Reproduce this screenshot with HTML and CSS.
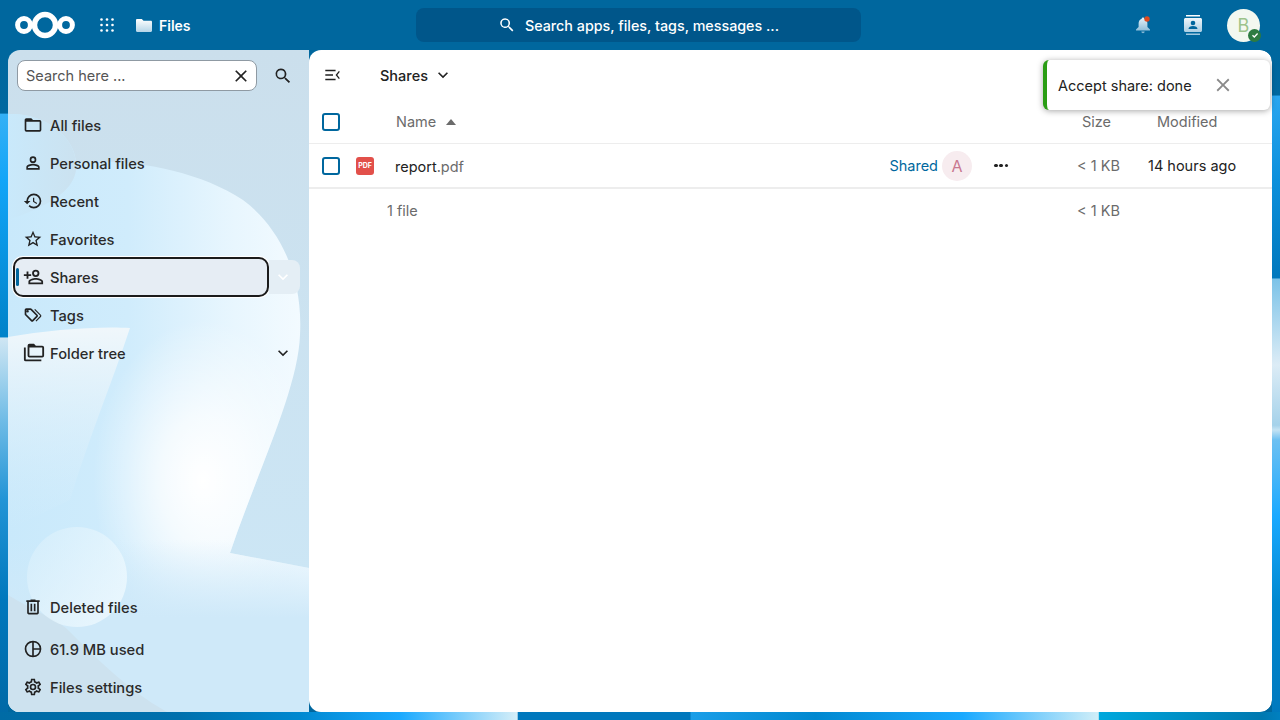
FILE: index.html
```html
<!DOCTYPE html>
<html lang="en">
<head>
    <meta charset="UTF-8">
    <meta name="viewport" content="width=device-width, initial-scale=1.0">
    <title>Files - Nextcloud</title>
    <link rel="stylesheet" href="styles.css">
</head>
<body>
    <!-- wallpaper: only the strips around the panels show -->
    <svg class="wallpaper" viewBox="0 0 1280 720" aria-hidden="true">
        <defs>
            <linearGradient id="wallLeft" gradientUnits="userSpaceOnUse" x1="0" y1="50" x2="0" y2="720">
                <stop offset="0" stop-color="#00679e"/>
                <stop offset="0.094" stop-color="#0068a0"/>
                <stop offset="0.096" stop-color="#35b0f5"/>
                <stop offset="0.194" stop-color="#12a5f8"/>
                <stop offset="0.428" stop-color="#0082c9"/>
                <stop offset="0.43" stop-color="#cfe6f3"/>
                <stop offset="0.552" stop-color="#70bce6"/>
                <stop offset="0.672" stop-color="#2294d6"/>
                <stop offset="0.821" stop-color="#0078bd"/>
                <stop offset="1" stop-color="#0068a5"/>
            </linearGradient>
            <linearGradient id="wallRight" gradientUnits="userSpaceOnUse" x1="0" y1="50" x2="0" y2="720">
                <stop offset="0" stop-color="#00679e"/>
                <stop offset="0.067" stop-color="#0068a0"/>
                <stop offset="0.069" stop-color="#2aa6f0"/>
                <stop offset="0.194" stop-color="#0c90dc"/>
                <stop offset="0.34" stop-color="#0078bd"/>
                <stop offset="0.342" stop-color="#7cc3e8"/>
                <stop offset="0.47" stop-color="#dcecf6"/>
                <stop offset="0.56" stop-color="#a5d2ea"/>
                <stop offset="0.567" stop-color="#c5e3f3"/>
                <stop offset="0.582" stop-color="#6cc0f2"/>
                <stop offset="0.697" stop-color="#1aa9ff"/>
                <stop offset="0.825" stop-color="#0088d0"/>
                <stop offset="1" stop-color="#0078bd"/>
            </linearGradient>
            <linearGradient id="wallBottom" gradientUnits="userSpaceOnUse" x1="0" y1="0" x2="1280" y2="0">
                <stop offset="0" stop-color="#006ba5"/>
                <stop offset="0.14" stop-color="#0070ad"/>
                <stop offset="0.234" stop-color="#0088d0"/>
                <stop offset="0.312" stop-color="#1aa9ff"/>
                <stop offset="0.404" stop-color="#d5eef8"/>
                <stop offset="0.405" stop-color="#0078bd"/>
                <stop offset="0.539" stop-color="#0078bd"/>
                <stop offset="0.54" stop-color="#1a9ee8"/>
                <stop offset="0.637" stop-color="#0088d0"/>
                <stop offset="0.752" stop-color="#1aa9ff"/>
                <stop offset="0.858" stop-color="#d0eef8"/>
                <stop offset="0.859" stop-color="#00a8dd"/>
                <stop offset="0.986" stop-color="#0078b0"/>
                <stop offset="1" stop-color="#0080c0"/>
            </linearGradient>
        </defs>
        <rect width="1280" height="720" fill="#00679e"/>
        <rect x="0" y="50" width="8" height="670" fill="url(#wallLeft)"/>
        <rect x="1272" y="50" width="8" height="670" fill="url(#wallRight)"/>
        <rect x="0" y="712" width="1280" height="8" fill="url(#wallBottom)"/>
    </svg>

    <header class="topbar">
        <div class="topbar-left">
            <svg class="logo" viewBox="0 0 62 30" width="62" height="30">
                <circle cx="10" cy="15" r="6.4" fill="none" stroke="#fff" stroke-width="5"/>
                <circle cx="31" cy="15" r="10.5" fill="none" stroke="#fff" stroke-width="5.4"/>
                <circle cx="52" cy="15" r="6.4" fill="none" stroke="#fff" stroke-width="5"/>
            </svg>
            <svg class="apps" viewBox="0 0 14 14" width="14" height="14">
                <g fill="#fff">
                    <circle cx="1.5" cy="1.5" r="1.3"/><circle cx="7" cy="1.5" r="1.3"/><circle cx="12.5" cy="1.5" r="1.3"/>
                    <circle cx="1.5" cy="7" r="1.3"/><circle cx="7" cy="7" r="1.3"/><circle cx="12.5" cy="7" r="1.3"/>
                    <circle cx="1.5" cy="12.5" r="1.3"/><circle cx="7" cy="12.5" r="1.3"/><circle cx="12.5" cy="12.5" r="1.3"/>
                </g>
            </svg>
            <div class="current-app">
                <svg viewBox="0 0 16 13" width="16" height="13">
                    <defs>
                        <linearGradient id="appFade" x1="0" y1="0" x2="0" y2="1">
                            <stop offset="0" stop-color="#fff"/>
                            <stop offset="1" stop-color="#b5d5e8"/>
                        </linearGradient>
                    </defs>
                    <path d="M1.2 0h4.6l1.7 1.8h7.3c.7 0 1.2.5 1.2 1.2v8.8c0 .7-.5 1.2-1.2 1.2H1.2C.5 13 0 12.5 0 11.8V1.2C0 .5.5 0 1.2 0z" fill="url(#appFade)"/>
                </svg>
                <span>Files</span>
            </div>
        </div>

        <div class="unified-search">
            <svg viewBox="0 0 24 24" width="18" height="18"><path d="M9.5 3a6.5 6.5 0 0 1 4.95 10.71l.27.29h.78l5 5-1.5 1.5-5-5v-.78l-.29-.27A6.5 6.5 0 1 1 9.5 3m0 2a4.5 4.500 0 1 0 0 9 4.500 4.500 0 0 0 0-9z" fill="#fff"/></svg>
            <span>Search apps, files, tags, messages ...</span>
        </div>

        <div class="topbar-right">
            <svg class="bell" viewBox="0 0 16 18" width="16" height="18">
                <defs>
                    <linearGradient id="bellFade" x1="0" y1="0" x2="0" y2="1">
                        <stop offset="0" stop-color="#e6f1f7"/>
                        <stop offset="1" stop-color="#7fb4d3"/>
                    </linearGradient>
                </defs>
                <path d="M8 1.5c-.8 0-1.3.6-1.3 1.3C4.7 3.500 3.600 5.300 3.600 7.500V11L1 13.600v1h14v-1L12.400 11V7.500c0-2.200-1.100-4-3.100-4.700C9.300 2.100 8.800 1.500 8 1.500zM6.300 15.500a1.700 1.700 0 0 0 3.400 0z" fill="url(#bellFade)"/>
                <circle cx="12" cy="3" r="2.7" fill="#dd4a1f"/>
            </svg>
            <svg class="contacts" viewBox="0 0 18 20" width="18" height="20">
                <defs>
                    <linearGradient id="cardFade" x1="0" y1="0" x2="0" y2="1">
                        <stop offset="0" stop-color="#fff"/>
                        <stop offset="1" stop-color="#9cc6de"/>
                    </linearGradient>
                </defs>
                <path d="M2 0h14v1.500H2zM2 18.500h14V20H2zM1.500 3h15c.8 0 1.500.7 1.500 1.500v11c0 .8-.7 1.500-1.500 1.500h-15C.7 17 0 16.300 0 15.500v-11C0 3.700.7 3 1.500 3z" fill="url(#cardFade)"/>
                <circle cx="9" cy="8" r="2.3" fill="#00679e"/>
                <path d="M4.500 14c0-2 2-3 4.500-3s4.500 1 4.500 3z" fill="#00679e"/>
            </svg>
            <div class="user-avatar">
                <span>B</span>
                <span class="user-status">
                    <svg viewBox="0 0 10 10" width="10" height="10"><path d="M2.500 5.200l1.800 1.800 3.300-3.500" fill="none" stroke="#fff" stroke-width="1.300"/></svg>
                </span>
            </div>
        </div>
    </header>

    <div class="content">
        <nav class="sidebar">
            <!-- soft shapes behind the nav -->
            <svg class="sidebar-art" viewBox="0 0 301 662" aria-hidden="true">
                <defs>
                    <linearGradient id="artBase" x1="0" y1="0" x2="0" y2="1">
                        <stop offset="0" stop-color="#cbdfec"/>
                        <stop offset="0.8" stop-color="#cce6f5"/>
                    </linearGradient>
                    <linearGradient id="artShape" x1="0" y1="0" x2="1" y2="0">
                        <stop offset="0" stop-color="#c9e9fb"/>
                        <stop offset="0.4" stop-color="#d0ecfc"/>
                        <stop offset="0.75" stop-color="#e8f6fe"/>
                        <stop offset="1" stop-color="#f4fbff"/>
                    </linearGradient>
                    <linearGradient id="artBlob" x1="0" y1="0" x2="1" y2="0">
                        <stop offset="0" stop-color="#c9e9fb"/>
                        <stop offset="1" stop-color="#cbe2f0"/>
                    </linearGradient>
                    <linearGradient id="artBand" x1="0" y1="0" x2="0" y2="1">
                        <stop offset="0" stop-color="#f0f7fb"/>
                        <stop offset="1" stop-color="#d6edfa" stop-opacity="0"/>
                    </linearGradient>
                    <radialGradient id="artGlow">
                        <stop offset="0" stop-color="#fff"/>
                        <stop offset="0.4" stop-color="#fff" stop-opacity="0.7"/>
                        <stop offset="1" stop-color="#fff" stop-opacity="0"/>
                    </radialGradient>
                    <linearGradient id="artFloor" x1="0" y1="0" x2="0" y2="1">
                        <stop offset="0" stop-color="#cfe9f9" stop-opacity="0"/>
                        <stop offset="0.45" stop-color="#cfe9f9"/>
                    </linearGradient>
                    <linearGradient id="artBall" x1="0" y1="0" x2="1" y2="0.6">
                        <stop offset="0" stop-color="#d6eefb"/>
                        <stop offset="1" stop-color="#f2fbff"/>
                    </linearGradient>
                    <clipPath id="artClip">
                        <path d="M0 64C35 62 66 85 68 112 120 108 190 120 235 150 275 180 295 230 292 285 290 340 250 420 222 503L301 518V662H0Z"/>
                    </clipPath>
                </defs>
                <rect width="301" height="662" fill="url(#artBase)"/>
                <g clip-path="url(#artClip)">
                    <rect width="301" height="662" fill="url(#artShape)"/>
                    <path d="M0 64C35 62 66 85 68 112 70 130 60 150 0 170Z" fill="url(#artBlob)"/>
                    <path d="M0 287C40 280 90 276 122 278 105 330 80 390 62 450L0 480Z" fill="url(#artBand)"/>
                    <ellipse cx="195" cy="430" rx="110" ry="160" fill="url(#artGlow)"/>
                    <rect y="490" width="301" height="172" fill="url(#artFloor)"/>
                </g>
                <path d="M0 545C25 560 50 570 60 580 90 610 120 640 159 662H0Z" fill="#cde2ef"/>
                <circle cx="69" cy="527" r="50" fill="url(#artBall)" fill-opacity="0.7"/>
            </svg>

            <div class="filter-row">
                <div class="filter-input">
                    <span>Search here ...</span>
                    <svg viewBox="0 0 24 24" width="20" height="20"><path d="M19 6.41L17.59 5 12 10.59 6.41 5 5 6.41 10.59 12 5 17.59 6.41 19 12 13.41 17.59 19 19 17.59 13.41 12z" fill="#222"/></svg>
                </div>
                <svg viewBox="0 0 24 24" width="20" height="20"><path d="M9.5 3a6.5 6.5 0 0 1 4.95 10.71l.27.29h.78l5 5-1.5 1.5-5-5v-.78l-.29-.27A6.5 6.5 0 1 1 9.5 3m0 2a4.500 4.500 0 1 0 0 9 4.500 4.500 0 0 0 0-9z" fill="#222"/></svg>
            </div>

            <ul class="nav-list">
                <li class="nav-item">
                    <svg viewBox="0 0 24 24" width="20" height="20"><path d="M20 18H4V8h16m0-2h-8l-2-2H4c-1.110 0-2 .89-2 2v12a2 2 0 0 0 2 2h16a2 2 0 0 0 2-2V8a2 2 0 0 0-2-2z" fill="#222"/></svg>
                    <span>All files</span>
                </li>
                <li class="nav-item">
                    <svg viewBox="0 0 24 24" width="20" height="20"><path d="M12 4a4 4 0 1 1 0 8 4 4 0 0 1 0-8m0 2a2 2 0 1 0 0 4 2 2 0 0 0 0-4m0 7c2.670 0 8 1.330 8 4v3H4v-3c0-2.670 5.330-4 8-4m0 1.900c-2.970 0-6.100 1.460-6.100 2.100v1.100h12.200V17c0-.64-3.130-2.100-6.100-2.100z" fill="#222"/></svg>
                    <span>Personal files</span>
                </li>
                <li class="nav-item">
                    <svg viewBox="0 0 24 24" width="20" height="20"><path d="M13.500 8H12v5l4.280 2.540.72-1.210-3.500-2.080V8M13 3a9 9 0 0 0-9 9H1l3.960 4.030L9 12H6a7 7 0 1 1 7 7c-1.930 0-3.680-.79-4.940-2.060l-1.420 1.420A8.900 8.900 0 0 0 13 21a9 9 0 0 0 0-18z" fill="#222"/></svg>
                    <span>Recent</span>
                </li>
                <li class="nav-item">
                    <svg viewBox="0 0 24 24" width="20" height="20"><path d="M12 15.390l-3.760 2.270.99-4.280-3.320-2.880 4.380-.37L12 6.100l1.710 4.040 4.380.37-3.320 2.880.99 4.280M22 9.240l-7.190-.61L12 2 9.190 8.630 2 9.240l5.450 4.730L5.820 21 12 17.270 18.180 21l-1.640-7.030L22 9.240z" fill="#222"/></svg>
                    <span>Favorites</span>
                </li>
                <li class="nav-item active">
                    <svg viewBox="0 0 24 24" width="22" height="22"><path d="M15 4a4 4 0 1 1 0 8 4 4 0 0 1 0-8m0 2a2 2 0 1 0 0 4 2 2 0 0 0 0-4M7 6v3h3v2H7v3H5v-3H2V9h3V6h2m8 7c2.670 0 8 1.330 8 4v3H7v-3c0-2.670 5.330-4 8-4m0 1.900c-3 0-6.100 1.460-6.100 2.100v1.100h12.200V17c0-.64-3.100-2.100-6.100-2.100z" fill="#222"/></svg>
                    <span>Shares</span>
                    <span class="nav-toggle">
                        <svg viewBox="0 0 24 24" width="20" height="20"><path d="M7.410 8.580L12 13.170l4.590-4.590L18 10l-6 6-6-6z" fill="#fff"/></svg>
                    </span>
                </li>
                <li class="nav-item">
                    <svg viewBox="0 0 24 24" width="20" height="20"><path d="M5.500 9A1.500 1.500 0 1 0 5.500 6a1.500 1.500 0 0 0 0 3m11.910 2.580c.36.360.59.860.59 1.420 0 .55-.22 1.050-.59 1.410l-5 5a2 2 0 0 1-2.830 0l-6.990-6.990C2.220 12.060 2 11.560 2 11V6c0-1.110.89-2 2-2h5c.55 0 1.050.22 1.410.58l7 7M13.540 5.710l1-1 6.870 6.870c.37.360.59.870.59 1.420s-.22 1.050-.58 1.410l-5.380 5.380-1-1L20.750 13l-7.210-7.290M4 6v5l7 7 5-5-7-7H4z" fill="#222"/></svg>
                    <span>Tags</span>
                </li>
                <li class="nav-item">
                    <svg viewBox="0 0 24 24" width="22" height="22"><path d="M3 6H1v13a2 2 0 0 0 2 2h17v-2H3V6m18-2h-7l-2-2H7a2 2 0 0 0-2 2v11a2 2 0 0 0 2 2h14a2 2 0 0 0 2-2V6a2 2 0 0 0-2-2m0 11H7V6h14v9z" fill="#222"/></svg>
                    <span>Folder tree</span>
                    <span class="nav-toggle plain">
                        <svg viewBox="0 0 24 24" width="20" height="20"><path d="M7.410 8.580L12 13.170l4.590-4.590L18 10l-6 6-6-6z" fill="#222"/></svg>
                    </span>
                </li>
            </ul>

            <ul class="nav-list nav-bottom">
                <li class="nav-item">
                    <svg viewBox="0 0 24 24" width="20" height="20"><path d="M9 3v1H4v2h1v13a2 2 0 0 0 2 2h10a2 2 0 0 0 2-2V6h1V4h-5V3H9M7 6h10v13H7V6m2 2v9h2V8H9m4 0v9h2V8h-2z" fill="#222"/></svg>
                    <span>Deleted files</span>
                </li>
                <li class="nav-item quota">
                    <svg viewBox="0 0 24 24" width="20" height="20"><path d="M12 2a10 10 0 1 0 0 20 10 10 0 0 0 0-20m-1 2.070V19.930A8 8 0 0 1 11 4.070m2 0A8 8 0 0 1 19.930 11H13V4.070M13 13h6.930A8 8 0 0 1 13 19.930V13z" fill="#222"/></svg>
                    <span>61.9 MB used</span>
                </li>
                <li class="nav-item">
                    <svg viewBox="0 0 24 24" width="20" height="20"><path d="M12 8a4 4 0 1 1 0 8 4 4 0 0 1 0-8m0 2a2 2 0 1 0 0 4 2 2 0 0 0 0-4m-2 12c-.25 0-.46-.18-.5-.42l-.37-2.650c-.63-.25-1.170-.59-1.690-.99l-2.490 1.010c-.22.080-.49 0-.61-.22l-2-3.460a.49.490 0 0 1 .12-.64l2.110-1.660L4.500 12l.07-1-2.110-1.630a.49.490 0 0 1-.12-.64l2-3.460c.12-.22.390-.31.610-.22l2.490 1c.52-.39 1.060-.730 1.690-.98l.37-2.650c.04-.24.250-.42.500-.42h4c.25 0 .46.180.5.420l.37 2.650c.63.250 1.170.590 1.690.980l2.490-1c.22-.09.490 0 .61.220l2 3.460c.13.220.07.490-.12.640L19.430 11l.07 1-.07 1 2.110 1.630c.19.150.25.420.12.640l-2 3.460c-.12.220-.39.310-.61.220l-2.490-1c-.52.390-1.060.730-1.690.980l-.37 2.650c-.04.240-.25.420-.5.420h-4m1.250-18l-.37 2.610c-1.200.250-2.260.890-3.030 1.780L5.440 7.350l-.75 1.300L6.800 10.200a5.550 5.550 0 0 0 0 3.600l-2.120 1.560.75 1.300 2.430-1.040c.77.880 1.820 1.520 3.010 1.760l.37 2.620h1.520l.37-2.610c1.190-.250 2.240-.890 3.010-1.770l2.430 1.040.75-1.300-2.120-1.550c.4-1.170.4-2.440 0-3.610l2.110-1.550-.75-1.300-2.410 1.040a5.420 5.420 0 0 0-3.030-1.770L12.750 4h-1.500z" fill="#222"/></svg>
                    <span>Files settings</span>
                </li>
            </ul>
        </nav>

        <main class="files">
            <div class="files-toolbar">
                <svg viewBox="0 0 18 14" width="16" height="12"><path d="M0 1h12v1.700H0zM0 6.200h9v1.700H0zM0 11.300h12V13H0zM17 3.300L14 7l3 3.700-1.200.9L12 7l3.800-4.600z" fill="#222"/></svg>
                <span class="crumb">Shares</span>
                <svg viewBox="0 0 24 24" width="20" height="20"><path d="M7.410 8.580L12 13.170l4.590-4.590L18 10l-6 6-6-6z" fill="#222"/></svg>
            </div>

            <div class="file-row head-row">
                <span class="check"></span>
                <span class="col-name head-name">Name <i class="sort-arrow"></i></span>
                <span class="col-size">Size</span>
                <span class="col-date">Modified</span>
            </div>

            <div class="file-row">
                <span class="check"></span>
                <span class="pdf-icon">PDF</span>
                <span class="col-name file-name">report<em>.pdf</em></span>
                <span class="shared-label">Shared</span>
                <span class="share-avatar">A</span>
                <span class="more-dots"><i></i><i></i><i></i></span>
                <span class="col-size">&lt; 1 KB</span>
                <span class="col-date date-value">14 hours ago</span>
            </div>

            <div class="file-row foot-row">
                <span class="foot-count">1 file</span>
                <span class="col-size">&lt; 1 KB</span>
                <span class="col-date"></span>
            </div>
        </main>
    </div>

    <div class="toast">
        <span>Accept share: done</span>
        <svg viewBox="0 0 24 24" width="22" height="22"><path d="M19 6.41L17.59 5 12 10.59 6.41 5 5 6.41 10.59 12 5 17.59 6.41 19 12 13.41 17.59 19 19 17.59 13.41 12z" fill="#8a8a8a"/></svg>
    </div>
</body>
</html>
```

FILE: styles.css
```css
* {
    margin: 0;
    padding: 0;
    box-sizing: border-box;
}

body {
    width: 1280px;
    height: 720px;
    overflow: hidden;
    font-family: Inter, "Liberation Sans", sans-serif;
    font-size: 15px;
    color: #222;
    display: flex;
    flex-direction: column;
}

ul {
    list-style: none;
}

.wallpaper {
    position: absolute;
    top: 0;
    left: 0;
    width: 1280px;
    height: 720px;
}

.topbar {
    position: relative;
    height: 50px;
    flex: none;
    display: flex;
    align-items: center;
    justify-content: space-between;
    padding: 0 20px 0 14px;
    color: #fff;
}

.topbar-left {
    display: flex;
    align-items: center;
    width: 290px;
}

.logo {
    margin-right: 24px;
}

.apps {
    margin-right: 22px;
}

.current-app {
    display: flex;
    align-items: center;
    gap: 7px;
    font-weight: 600;
    font-size: 14px;
    padding-top: 1px;
}

.unified-search {
    position: absolute;
    left: 416px;
    top: 8px;
    width: 445px;
    height: 34px;
    background: #00568a;
    border-radius: 8px;
    display: flex;
    align-items: center;
    justify-content: center;
    gap: 9px;
    font-size: 14.3px;
    font-weight: 500;
}

.topbar-right {
    display: flex;
    align-items: center;
}

.bell {
    margin-right: 33px;
}

.contacts {
    margin-right: 25px;
}

.user-avatar {
    position: relative;
    width: 33px;
    height: 33px;
    border-radius: 50%;
    background: #f3f8f0;
    color: #9cc38a;
    font-size: 18px;
    display: flex;
    align-items: center;
    justify-content: center;
}

.user-status {
    position: absolute;
    right: -1px;
    bottom: 0;
    width: 13px;
    height: 13px;
    border-radius: 50%;
    background: #2d7b41;
    display: flex;
    align-items: center;
    justify-content: center;
}

.content {
    position: relative;
    flex: 1;
    display: flex;
    margin: 0 8px 8px;
    border-radius: 12px;
    overflow: hidden;
}

.sidebar {
    position: relative;
    width: 301px;
    flex: none;
    display: flex;
    flex-direction: column;
    padding: 10px 0 6px;
    overflow: hidden;
}

.sidebar-art {
    position: absolute;
    top: 0;
    left: 0;
    width: 301px;
    height: 662px;
}

.filter-row {
    position: relative;
    display: flex;
    align-items: center;
    gap: 16px;
    padding-left: 9px;
    height: 31px;
    margin-bottom: 15px;
}

.filter-input {
    width: 240px;
    height: 31px;
    background: #fff;
    border: 1px solid #8f9aa3;
    border-radius: 8px;
    display: flex;
    align-items: center;
    justify-content: space-between;
    padding: 0 5px 0 8px;
    color: #555;
    font-size: 14.5px;
}

.nav-list {
    position: relative;
    display: flex;
    flex-direction: column;
}

.nav-bottom {
    margin-top: auto;
}

.nav-item {
    position: relative;
    height: 38px;
    display: flex;
    align-items: center;
    padding-left: 15px;
    gap: 7px;
    font-size: 14.7px;
    line-height: 18px;
    font-weight: 500;
    color: #2a2a2a;
}

.nav-item svg {
    flex: none;
}

.nav-item span:first-of-type {
    position: absolute;
    left: 42px;
    padding-top: 2px;
}

.quota {
    margin-top: 4px;
}

.nav-item.active::before {
    content: "";
    box-sizing: border-box;
    position: absolute;
    left: 5px;
    top: -1px;
    width: 256px;
    height: 40px;
    border: 2px solid #1b1b1b;
    border-radius: 10px;
    background: #e6edf4;
    box-shadow: 0 0 0 1px #fff;
}

.nav-item.active::after {
    content: "";
    position: absolute;
    left: 8px;
    top: 10px;
    width: 3px;
    height: 18px;
    background: #00679e;
    border-radius: 2px;
}

.nav-item.active > svg,
.nav-item.active > span:first-of-type {
    z-index: 1;
}

.nav-item.active > svg {
    margin-left: -1px;
    position: relative;
}

.nav-toggle {
    position: absolute;
    left: 261px;
    top: 2px;
    width: 31px;
    height: 34px;
    padding-right: 3px;
    background: #e4eef5;
    border-radius: 0 8px 8px 0;
    display: flex;
    align-items: center;
    justify-content: center;
}

.nav-toggle.plain {
    background: none;
}

.files {
    position: relative;
    flex: 1;
    background: #fff;
    border-radius: 12px;
    color: #222;
}

.files-toolbar {
    height: 50px;
    display: flex;
    align-items: center;
    padding-left: 16px;
    font-size: 14.5px;
    font-weight: 500;
}

.crumb {
    margin-left: 39px;
    margin-right: 5px;
}

.file-row {
    display: flex;
    align-items: center;
    height: 44px;
    padding-left: 13px;
    border-bottom: 1px solid #ededed;
    font-size: 14.5px;
}

.head-row {
    color: #6b6b6b;
}

.foot-row {
    border-bottom: none;
    color: #6b6b6b;
    border-top: 1px solid #ededed;
}

.check {
    width: 18px;
    height: 18px;
    flex: none;
    border: 2px solid #00679e;
    border-radius: 3px;
}

.pdf-icon {
    width: 18px;
    height: 18px;
    flex: none;
    margin-left: 16px;
    border-radius: 3px;
    background: #e2504a;
    color: #fff;
    font-size: 7px;
    font-weight: 700;
    text-align: center;
    line-height: 18px;
}

.col-name {
    flex: 1;
}

.head-name {
    margin-left: 56px;
    display: flex;
    align-items: center;
    gap: 10px;
}

.sort-arrow {
    width: 0;
    height: 0;
    border-left: 5.5px solid transparent;
    border-right: 5.5px solid transparent;
    border-bottom: 6px solid #6b6b6b;
}

.file-name {
    margin-left: 21px;
    padding-top: 1px;
    color: #222;
}

.file-name em {
    font-style: normal;
    color: #6b6b6b;
}

.shared-label {
    color: #00679e;
    margin-right: 4px;
}

.share-avatar {
    width: 30px;
    height: 30px;
    border-radius: 50%;
    background: #f7ecef;
    color: #c9788f;
    font-size: 16px;
    display: flex;
    align-items: center;
    justify-content: center;
    margin-right: 22px;
}

.more-dots {
    width: 14px;
    display: flex;
    justify-content: space-between;
    margin-right: 37px;
}

.more-dots i {
    width: 3.5px;
    height: 3.5px;
    border-radius: 50%;
    background: #222;
}

.col-size {
    width: 75px;
    text-align: right;
    color: #6b6b6b;
}

.col-date {
    width: 152px;
    padding-left: 37px;
    color: #6b6b6b;
}

.head-row .col-size {
    width: 66px;
}

.head-row .col-date {
    width: 161px;
    padding-left: 46px;
}

.date-value {
    padding-left: 28px;
    color: #222;
}

.foot-count {
    flex: 1;
    margin-left: 65px;
}

.toast {
    position: absolute;
    left: 1043px;
    top: 60px;
    width: 227px;
    height: 50px;
    background: #fff;
    border-left: 4px solid #2a9d14;
    border-radius: 6px;
    box-shadow: 0 1px 6px rgba(0, 0, 0, 0.35);
    display: flex;
    align-items: center;
    padding-left: 11px;
    gap: 20px;
    font-size: 14.5px;
}
```
